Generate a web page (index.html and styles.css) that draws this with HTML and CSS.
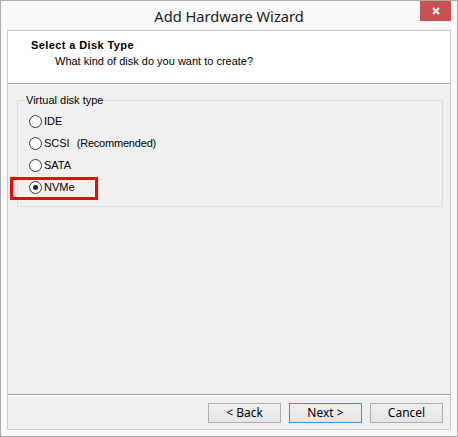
FILE: index.html
```html
<!DOCTYPE html>
<html lang="en">
<head>
  <meta charset="UTF-8" />
  <title>Add Hardware Wizard</title>
  <link rel="stylesheet" href="styles.css">
</head>
<body>

<div class="window">
  <div class="titlebar">
    <span class="title">Add Hardware Wizard</span>
    <div class="close">
      <svg width="8" height="8" viewBox="0 0 8 8">
        <path d="M1 1 L7 7 M7 1 L1 7" stroke="#fff" stroke-width="2" fill="none" />
      </svg>
    </div>
  </div>

  <div class="client">
    <div class="header">
      <div class="heading">Select a Disk Type</div>
      <div class="subheading">What kind of disk do you want to create?</div>
    </div>

    <div class="body">
      <fieldset class="group">
        <legend>Virtual disk type</legend>
        <div class="option"><span class="radio"></span>IDE</div>
        <div class="option"><span class="radio"></span>SCSI<span class="note">(Recommended)</span></div>
        <div class="option"><span class="radio"></span>SATA</div>
        <div class="option highlight"><span class="radio checked"></span>NVMe</div>
      </fieldset>
    </div>

    <div class="footer">
      <button class="btn">&lt; Back</button>
      <button class="btn default">Next &gt;</button>
      <button class="btn">Cancel</button>
    </div>
  </div>
</div>

</body>
</html>
```

FILE: styles.css
```css
body {
  margin: 0;
  background: #fff;
  font-family: "Liberation Sans", Arial, sans-serif;
  font-size: 11px;
  color: #000;
}
.window {
  width: 458px;
  height: 437px;
  box-sizing: border-box;
  border: 1px solid #ababab;
  background: #f9f9f9;
  display: flex;
  flex-direction: column;
}
.titlebar {
  position: relative;
  height: 29px;
  display: flex;
  justify-content: center;
  align-items: center;
}
.title {
  font-family: "Noto Sans", "Open Sans", sans-serif;
  font-size: 14.6px;
  color: #1a1a1a;
}
.close {
  position: absolute;
  top: 0;
  right: 6px;
  width: 31px;
  height: 20px;
  background: #c75050;
  display: flex;
  justify-content: center;
  align-items: center;
}
.client {
  flex: 1;
  margin: 0 6px 6px 6px;
  border: 1px solid #cacaca;
  background: #f0f0f0;
  display: flex;
  flex-direction: column;
}
.header {
  height: 52px;
  background: #fff;
  border-bottom: 1px solid #a0a0a0;
  box-shadow: 0 1px 0 #fff;
  box-sizing: content-box;
  padding: 0;
}
.heading {
  font-weight: bold;
  letter-spacing: 0.4px;
  line-height: 14px;
  padding: 7px 0 0 23px;
}
.subheading {
  line-height: 14px;
  margin-top: 2px;
  padding-left: 47px;
}
.body {
  flex: 1;
  margin-top: 1px;
  padding: 9px 7px 0 9px;
  border-bottom: 1px solid #a0a0a0;
  box-shadow: 0 1px 0 #fff;
}
.group {
  margin: 0;
  border: 1px solid #dcdcdc;
  padding: 3px 8px 8px 8px;
}
.group legend {
  padding: 0;
  line-height: 13px;
}
.option {
  height: 22px;
  display: flex;
  align-items: center;
  padding-left: 3px;
}
.radio {
  width: 13px;
  height: 13px;
  box-sizing: border-box;
  border: 1px solid #3c3c3c;
  border-radius: 50%;
  background: radial-gradient(circle, #fff 55%, #ececec 100%);
  margin-right: 2px;
  display: flex;
  justify-content: center;
  align-items: center;
}
.radio.checked::before {
  content: "";
  width: 5px;
  height: 5px;
  border-radius: 50%;
  background: #1c1c1c;
}
.note {
  margin-left: 7px;
  letter-spacing: -0.2px;
}
.highlight {
  position: relative;
}
.highlight::after {
  content: "";
  position: absolute;
  left: -16px;
  top: 1px;
  width: 88px;
  height: 23px;
  box-sizing: border-box;
  border: 3px solid #ff0000;
}
.footer {
  height: 33px;
  margin-top: 1px;
  box-sizing: border-box;
  padding: 7px 7px 0 0;
  display: flex;
  justify-content: flex-end;
  align-items: flex-start;
  gap: 8px;
}
.btn {
  width: 73px;
  height: 20px;
  padding: 0;
  border: 1px solid #acacac;
  border-radius: 0;
  background: linear-gradient(#f0f0f0, #e5e5e5);
  font-family: "Noto Sans", "Open Sans", sans-serif;
  font-size: 12px;
  color: #000;
  line-height: 18px;
}
.btn.default {
  border-color: #3c91e6;
}
```
